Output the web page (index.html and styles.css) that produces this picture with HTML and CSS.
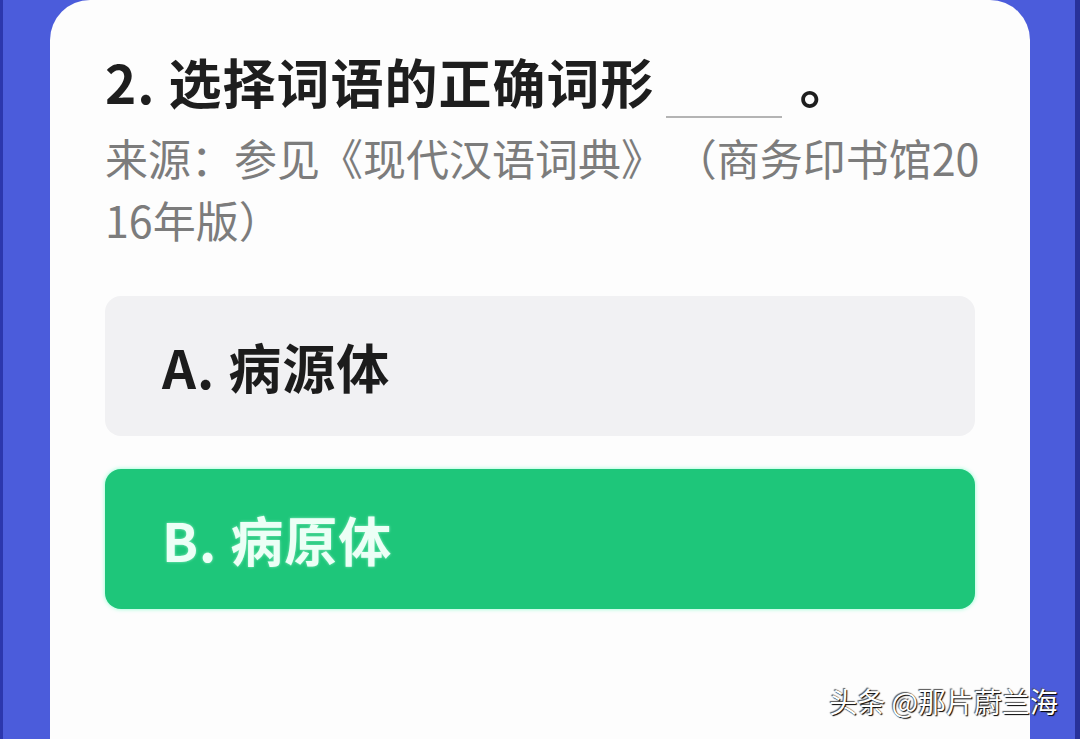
FILE: index.html
```html
<!DOCTYPE html>
<html lang="zh-CN">
<head>
    <meta charset="UTF-8">
    <meta name="viewport" content="width=device-width, initial-scale=1.0">
    <title>选择词语的正确词形</title>
    <link rel="stylesheet" href="styles.css">
</head>
<body>

    <div class="screen">
        <div class="card">
            <h2 class="question">2. 选择词语的正确词形 <span class="blank"></span>。</h2>
            <p class="source">来源：参见《现代汉语词典》 （商务印书馆2016年版）</p>

            <div class="options">
                <div class="option">A. 病源体</div>
                <div class="option correct">B. 病原体</div>
            </div>
        </div>
    </div>

    <div class="watermark">头条 @那片蔚兰海</div>

</body>
</html>
```

FILE: styles.css
```css
body {
    margin: 0;
    font-family: "Noto Sans CJK SC", "Noto Sans", sans-serif;
    background-color: #4b5cdb;
    overflow: hidden;
}

.screen {
    height: 100vh;
    border-left: 3px solid #2c37ad;
    border-right: 5px solid #28319a;
    padding: 0 45px 0 47px;
    background-color: #4b5cdb;
}

.card {
    height: 100%;
    background-color: #fdfdfd;
    border-radius: 40px 40px 0 0;
    padding: 45px 55px 0 55px;
    box-sizing: border-box;
}

.question {
    margin: 0;
    font-size: 53px;
    line-height: 72px;
    font-weight: bold;
    letter-spacing: 1px;
    color: #1e1e1e;
}

.blank {
    display: inline-block;
    width: 116px;
    height: 10px;
    border-bottom: 2px solid #b4b4b4;
    vertical-align: -14px;
    margin: 0 18px 0 -2px;
}

.source {
    margin: 8px -14px 0 0;
    font-size: 43px;
    line-height: 62px;
    color: #7c7c7c;
    word-break: break-all;
}

.options {
    display: flex;
    flex-direction: column;
    gap: 33px;
    margin-top: 46px;
}

.option {
    height: 140px;
    display: flex;
    align-items: center;
    padding-left: 57px;
    border-radius: 16px;
    background-color: #f1f1f3;
    font-size: 53px;
    font-weight: bold;
    letter-spacing: 1px;
    color: #1c1c1c;
}

.option.correct {
    background-color: #1ec67a;
    color: #ecfff6;
    box-shadow: 0 0 4px rgba(130, 255, 205, 0.9);
    text-shadow: 0 0 3px rgba(190, 255, 225, 0.7);
}

.watermark {
    position: absolute;
    right: 22px;
    bottom: 24px;
    font-size: 28px;
    line-height: 28px;
    color: #ffffff;
    text-shadow: 1px 1px 1px #000, -1px -1px 1px #555;
}
```
